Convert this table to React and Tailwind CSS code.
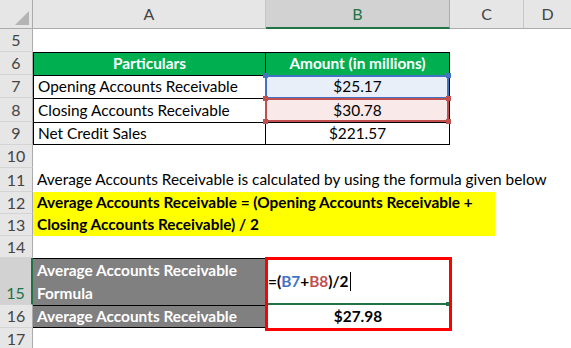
import React from 'react';

function RowHead({ n, className = 'h-[23px]' }) {
    return (
        <div className={`w-[33px] shrink-0 bg-[#e6e6e6] border-r border-r-[#ababab] border-b border-b-[#d4d4d4] flex items-center justify-center text-[#444] text-[16px] ${className}`}>
            {n}
        </div>
    );
}

function Corner({ color, pos }) {
    return <div className={`absolute w-[5px] h-[5px] ${color} ${pos}`} />;
}

export default function App() {
    return (
        <div className="w-[571px] h-[348px] overflow-hidden bg-white font-[Lato,sans-serif] text-[15.4px] text-black leading-none">
            {/* column headers */}
            <div className="flex h-[29px] bg-[#e6e6e6] text-[#444] text-[16px]">
                <div className="w-[33px] shrink-0 relative border-r border-b border-[#ababab]">
                    <svg className="absolute right-[3px] bottom-[3px]" width="14" height="14" viewBox="0 0 14 14">
                        <polygon points="14,0 14,14 0,14" fill="#b4b4b4" />
                    </svg>
                </div>
                <div className="w-[233px] shrink-0 border-r border-r-[#c6c6c6] border-b border-b-[#ababab] flex items-center justify-center">A</div>
                <div className="w-[184px] shrink-0 bg-[#d2d2d2] border-r border-r-[#ababab] border-b-2 border-b-[#217346] text-[#217346] flex items-center justify-center">B</div>
                <div className="w-[74px] shrink-0 border-r border-r-[#c6c6c6] border-b border-b-[#ababab] flex items-center justify-center">C</div>
                <div className="flex-1 border-b border-b-[#ababab] flex items-center justify-center">D</div>
            </div>

            {/* 5 */}
            <div className="flex">
                <RowHead n="5" />
            </div>

            {/* 6 */}
            <div className="flex">
                <RowHead n="6" />
                <div className="w-[233px] h-[23px] border-l border-t border-r border-black bg-[#00b050] text-white font-bold flex items-center justify-center">Particulars</div>
                <div className="w-[184px] h-[23px] border-t border-r border-black bg-[#00b050] text-white font-bold flex items-center justify-center">Amount (in millions)</div>
            </div>

            {/* 7 */}
            <div className="flex">
                <RowHead n="7" />
                <div className="w-[233px] h-[23px] border-l border-t border-r border-black flex items-center pl-[4px]">Opening Accounts Receivable</div>
                <div className="w-[184px] h-[23px] border-t border-r border-black bg-[#e9eff8] flex items-center justify-center relative">
                    $25.17
                    <div className="absolute left-[-1px] top-[-1px] right-0 bottom-[-1px] border-2 border-[#4472c4]" />
                    <Corner color="bg-[#4472c4]" pos="left-[-3px] top-[-3px]" />
                    <Corner color="bg-[#4472c4]" pos="right-[-2px] top-[-3px]" />
                </div>
            </div>

            {/* 8 */}
            <div className="flex">
                <RowHead n="8" className="h-[24px]" />
                <div className="w-[233px] h-[24px] border-l border-t border-r border-black flex items-center pl-[4px]">Closing Accounts Receivable</div>
                <div className="w-[184px] h-[24px] border-t border-r border-black bg-[#f9e9e9] flex items-center justify-center relative">
                    $30.78
                    <div className="absolute left-[-1px] top-[-1px] right-0 bottom-0 border-2 border-[#c0504d]" />
                    <Corner color="bg-[#c0504d]" pos="left-[-3px] top-[-3px]" />
                    <Corner color="bg-[#c0504d]" pos="right-[-2px] top-[-3px]" />
                    <Corner color="bg-[#c0504d]" pos="left-[-3px] bottom-[-2px]" />
                    <Corner color="bg-[#c0504d]" pos="right-[-2px] bottom-[-2px]" />
                </div>
            </div>

            {/* 9 */}
            <div className="flex">
                <RowHead n="9" />
                <div className="w-[233px] h-[23px] border border-black flex items-center pl-[4px]">Net Credit Sales</div>
                <div className="w-[184px] h-[23px] border-t border-b border-r border-black flex items-center justify-center">$221.57</div>
            </div>

            {/* 10 */}
            <div className="flex">
                <RowHead n="10" />
            </div>

            {/* 11 */}
            <div className="flex">
                <RowHead n="11" className="h-[24px]" />
                <div className="h-[24px] flex items-center pl-[4px] whitespace-nowrap">
                    Average Accounts Receivable is calculated by using the formula given below
                </div>
            </div>

            {/* 12-13 */}
            <div className="flex">
                <div className="flex flex-col">
                    <RowHead n="12" className="h-[22px]" />
                    <RowHead n="13" className="h-[22px]" />
                </div>
                <div className="w-[462px] h-[44px] bg-[#ffff00] font-bold pl-[4px] flex flex-col whitespace-nowrap">
                    <div className="h-[22px] flex items-center">Average Accounts Receivable = (Opening Accounts Receivable +</div>
                    <div className="h-[22px] flex items-center">Closing Accounts Receivable) / 2</div>
                </div>
            </div>

            {/* 14 */}
            <div className="flex">
                <RowHead n="14" className="h-[22px]" />
            </div>

            {/* 15-16 */}
            <div className="relative">
                <div className="flex">
                    <div className="w-[33px] h-[47px] shrink-0 bg-[#d2d2d2] border-r-2 border-r-[#217346] border-b border-b-[#d4d4d4] flex items-end justify-center pb-[3px] text-[#217346] text-[16px]">15</div>
                    <div className="w-[233px] h-[47px] bg-[#808080] border-t border-r border-black text-white font-bold px-[4px] flex flex-col justify-center leading-[23px]">
                        <div>Average Accounts Receivable</div>
                        <div>Formula</div>
                    </div>
                    <div className="w-[184px] h-[47px] relative flex items-center pl-[2px] font-bold">
                        <span>=(</span>
                        <span className="text-[#4472c4]">B7</span>
                        <span>+</span>
                        <span className="text-[#c0504d]">B8</span>
                        <span>)/2</span>
                        <span className="w-px h-[19px] bg-black ml-[1px]" />
                        <div className="absolute left-[2px] right-[1px] bottom-0 h-[2px] bg-[#217346]" />
                        <div className="absolute right-0 bottom-[-1px] w-[4px] h-[4px] bg-[#217346]" />
                    </div>
                </div>
                <div className="flex">
                    <RowHead n="16" />
                    <div className="w-[233px] h-[23px] bg-[#808080] border-t border-b border-r border-black text-white font-bold pl-[4px] flex items-center">Average Accounts Receivable</div>
                    <div className="w-[184px] h-[23px] font-bold flex items-center justify-center">$27.98</div>
                </div>
                <div className="absolute left-[265px] top-[-1px] w-[187px] h-[74px] border-[3px] border-[#ff0000]" />
            </div>

            {/* 17 */}
            <div className="flex">
                <RowHead n="17" />
            </div>
        </div>
    );
}
